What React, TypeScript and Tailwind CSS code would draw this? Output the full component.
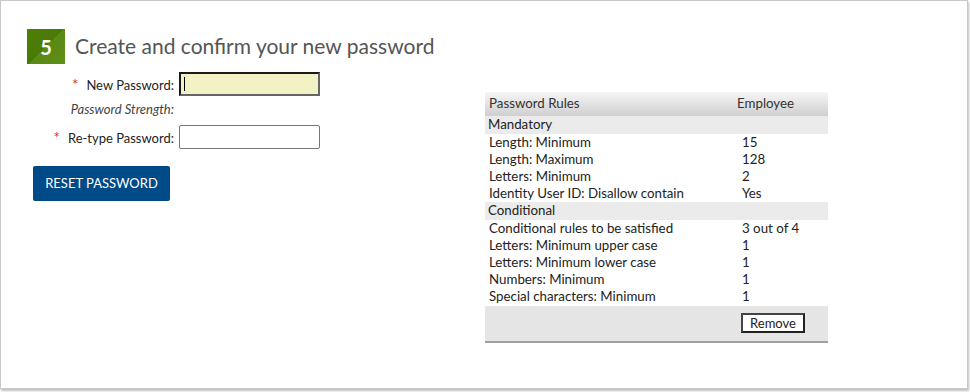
const font = { fontFamily: "Lato, 'Open Sans', sans-serif" };

const mandatory: [string, string][] = [
  ["Length: Minimum", "15"],
  ["Length: Maximum", "128"],
  ["Letters: Minimum", "2"],
  ["Identity User ID: Disallow contain", "Yes"],
];

const conditional: [string, string][] = [
  ["Conditional rules to be satisfied", "3 out of 4"],
  ["Letters: Minimum upper case", "1"],
  ["Letters: Minimum lower case", "1"],
  ["Numbers: Minimum", "1"],
  ["Special characters: Minimum", "1"],
];

function RuleRow({ label, value }: { label: string; value: string }) {
  return (
    <div className="flex h-[17px] items-center text-[13.3px] text-[#222]">
      <div className="w-[257px] pl-[4px]">{label}</div>
      <div>{value}</div>
    </div>
  );
}

function Section({ title }: { title: string }) {
  return (
    <div className="flex h-[18px] items-center bg-[#ebebeb] pl-[3px] text-[13.3px] text-[#222]">
      {title}
    </div>
  );
}

export default function App() {
  return (
    <div className="h-[392px] w-[970px] bg-[#fff]" style={font}>
      <div className="h-[389px] w-[968px] border border-[#c8c8cc] bg-white shadow-[1px_2px_2px_rgba(0,0,0,0.25)]">
        <div className="flex items-start pl-[26px] pt-[28px]">
          <div className="flex h-[35px] w-[38px] items-center justify-center bg-[linear-gradient(135deg,#4f7f08_0%,#4a7a06_50%,#5a8a14_50%,#5f8f18_100%)] text-[20px] font-bold text-white">
            5
          </div>
          <h1 className="ml-[10px] mt-[4px] text-[21px] leading-[25px] text-[#555]">
            Create and confirm your new password
          </h1>
        </div>

        <div className="flex">
          <div className="w-[484px]">
            <div className="mt-[8px] flex items-center">
              <div className="w-[178px] pr-[5px] text-right text-[13px] text-[#222]">
                <span className="mr-[8px] text-[15px] text-[#d32f2f]">*</span>New Password:
              </div>
              <div className="flex h-[24px] w-[141px] items-center border-2 border-t-[#1a1a1a] border-l-[#1a1a1a] border-r-[#666] border-b-[#666] bg-[#f2f2c4] pl-[3px]">
                <div className="h-[14px] w-px bg-black" />
              </div>
            </div>
            <div className="mt-[5px] flex h-[17px] items-center">
              <div className="w-[178px] pr-[5px] text-right text-[13px] italic text-[#444]">Password Strength:</div>
            </div>
            <div className="mt-[7px] flex items-center">
              <div className="w-[178px] pr-[5px] text-right text-[13px] text-[#222]">
                <span className="mr-[8px] text-[15px] text-[#d32f2f]">*</span>Re-type Password:
              </div>
              <div className="h-[24px] w-[141px] rounded-[2px] border border-[#767676] bg-white" />
            </div>
            <button className="ml-[32px] mt-[17px] h-[35px] w-[137px] rounded-[2px] bg-[#004a87] text-[13px] text-white">
              RESET PASSWORD
            </button>
          </div>

          <div className="mt-[28px] w-[343px]">
            <div className="flex h-[24px] items-center bg-[linear-gradient(to_bottom,#f6f6f6,#cfcfcf)] text-[13.3px] text-[#333]">
              <div className="w-[252px] pl-[4px]">Password Rules</div>
              <div>Employee</div>
            </div>
            <Section title="Mandatory" />
            {mandatory.map(([l, v]) => (
              <RuleRow key={l} label={l} value={v} />
            ))}
            <Section title="Conditional" />
            {conditional.map(([l, v]) => (
              <RuleRow key={l} label={l} value={v} />
            ))}
            <div className="mt-[1px] flex h-[37px] justify-end border-b-2 border-[#a0a0a0] bg-[#e5e5e5] pr-[23px] pt-[7px]">
              <button className="h-[20px] w-[64px] border-2 border-t-[#444] border-l-[#444] border-r-[#222] border-b-[#222] bg-white text-[13px] leading-none text-[#222]">
                Remove
              </button>
            </div>
          </div>
        </div>
      </div>
    </div>
  );
}
